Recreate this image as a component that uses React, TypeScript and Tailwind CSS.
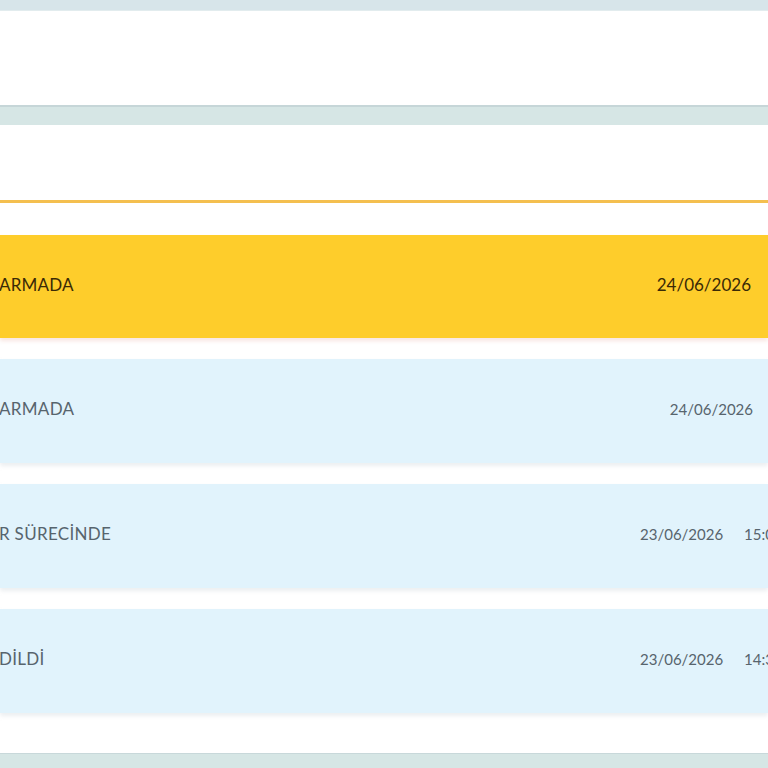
type Row = {
  status: string
  date: string
  time?: string
  active?: boolean
}

const rows: Row[] = [
  { status: 'ARMADA', date: '24/06/2026', active: true },
  { status: 'ARMADA', date: '24/06/2026' },
  { status: 'R SÜRECİNDE', date: '23/06/2026', time: '15:05' },
  { status: 'DİLDİ', date: '23/06/2026', time: '14:30' },
]

function StatusRow({ row }: { row: Row }) {
  if (row.active) {
    return (
      <div className="flex h-[103px] items-center bg-[#fecd2b] pb-[4px] text-[#3a2a06] shadow-[0_3px_4px_rgba(240,200,190,0.45)]">
        <span className="-ml-[1px] flex-1 text-[17px] tracking-[0.2px]">{row.status}</span>
        <span className="mr-[17px] text-[17px]">{row.date}</span>
      </div>
    )
  }
  return (
    <div className="flex h-[104px] items-center bg-[#e1f3fc] pb-[4px] text-[#57646d] shadow-[0_3px_4px_rgba(200,210,215,0.35)]">
      <span className="-ml-[1px] flex-1 text-[17px] tracking-[0.3px]">{row.status}</span>
      {row.time ? (
        <>
          <span className="w-[84px] text-[15px]">{row.date}</span>
          <span className="ml-[20px] -mr-[20px] w-[44px] shrink-0 text-[15px]">{row.time}</span>
        </>
      ) : (
        <span className="mr-[15px] text-[15px]">{row.date}</span>
      )}
    </div>
  )
}

export default function App() {
  return (
    <div
      className="flex h-[768px] w-[768px] flex-col overflow-hidden bg-[#d7e5ea]"
      style={{ fontFamily: 'Lato, "Open Sans", sans-serif' }}
    >
      <div className="h-[11px] shrink-0 border-b border-[#e2ecee]" />
      <div className="h-[94px] shrink-0 bg-white" />
      <div className="h-[20px] shrink-0 border-t-2 border-[#c6d6d8] bg-[#d6e6e5]" />

      <div className="flex shrink-0 flex-col bg-white">
        <div className="h-[78px] border-b-[3px] border-[#f4bf4f]" />
        <div className="flex flex-col gap-[21px] pt-[32px] pb-[40px]">
          {rows.map((row, i) => (
            <StatusRow key={i} row={row} />
          ))}
        </div>
      </div>

      <div className="flex-1 border-t border-[#c8d8da] bg-[#d6e6e5]" />
    </div>
  )
}
